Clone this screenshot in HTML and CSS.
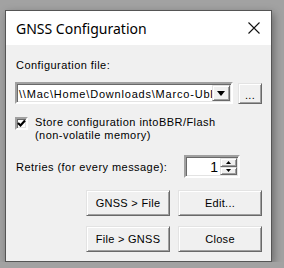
FILE: index.html
```html
<!DOCTYPE html>
<html lang="en">
<head>
  <meta charset="UTF-8">
  <title>GNSS Configuration</title>
  <link rel="stylesheet" href="styles.css">
</head>
<body>

<div class="dialog">
  <div class="titlebar">
    <span class="title">GNSS Configuration</span>
    <svg class="close" width="12" height="12" viewBox="0 0 12 12">
      <path d="M0.5 0.5 L11.5 11.5 M11.5 0.5 L0.5 11.5" stroke="#111" stroke-width="1.1" fill="none"/>
    </svg>
  </div>

  <div class="content">
    <div class="label">Configuration file:</div>

    <div class="file-row">
      <div class="combo sunken">
        <span class="combo-text">\\Mac\Home\Downloads\Marco-Ublox\config.txt</span>
        <span class="drop raised">
          <svg width="8" height="5" viewBox="0 0 8 5"><path d="M0 0 H8 L4 5 Z" fill="#000"/></svg>
        </span>
      </div>
      <button class="btn raised browse">...</button>
    </div>

    <div class="check-row">
      <span class="checkbox sunken">
        <svg width="9" height="9" viewBox="0 0 9 9"><path d="M1 4 L3.5 6.5 L8 1.5" stroke="#000" stroke-width="2.2" fill="none"/></svg>
      </span>
      <span class="check-text">Store configuration intoBBR/Flash<br>(non-volatile memory)</span>
    </div>

    <div class="retry-row">
      <span class="retry-label">Retries (for every message):</span>
      <div class="spin sunken">
        <span class="spin-value">1</span>
        <span class="spin-btns">
          <span class="spin-btn raised"><svg width="5" height="3" viewBox="0 0 5 3"><path d="M0 3 H5 L2.5 0 Z" fill="#000"/></svg></span>
          <span class="spin-btn raised"><svg width="5" height="3" viewBox="0 0 5 3"><path d="M0 0 H5 L2.5 3 Z" fill="#000"/></svg></span>
        </span>
      </div>
    </div>

    <div class="btn-row">
      <button class="btn raised action">GNSS &gt; File</button>
      <button class="btn raised action">Edit...</button>
    </div>
    <div class="btn-row second">
      <button class="btn raised action">File &gt; GNSS</button>
      <button class="btn raised action">Close</button>
    </div>
  </div>
</div>

</body>
</html>
```

FILE: styles.css
```css
body {
  margin: 0;
  padding: 10px 0 0 5px;
  background: #a2a2a2;
  font-family: "Liberation Sans", Arial, sans-serif;
  font-size: 11px;
  letter-spacing: 0.45px;
  color: #000;
}
.dialog {
  width: 267px;
  height: 252px;
  box-sizing: border-box;
  border: 1px solid #555;
  background: #f0f0f0;
  box-shadow: 2px 3px 8px rgba(0, 0, 0, 0.35);
}
.titlebar {
  height: 34px;
  background: #fff;
  display: flex;
  align-items: center;
  justify-content: space-between;
  padding: 0 11px 0 10px;
}
.title {
  font-family: "Noto Sans", sans-serif;
  font-size: 14px;
  letter-spacing: 0;
  color: #000;
}
.close { display: block; }
.content {
  padding: 14px 9px 0 9px;
}
.label {
  line-height: 13px;
  padding-left: 1px;
}

.sunken {
  border: 2px solid;
  border-color: #a0a0a0 #fff #fff #a0a0a0;
  box-shadow: inset 1px 1px 0 #696969, inset -1px -1px 0 #e3e3e3;
  background: #fff;
  box-sizing: border-box;
}
.raised {
  border: 1px solid;
  border-color: #e3e3e3 #696969 #696969 #e3e3e3;
  box-shadow: inset 1px 1px 0 #fff, inset -1px -1px 0 #a0a0a0;
  background: #f0f0f0;
  box-sizing: border-box;
}

.file-row {
  display: flex;
  align-items: center;
  gap: 5px;
  margin-top: 10px;
}
.combo {
  width: 218px;
  height: 22px;
  display: flex;
  align-items: stretch;
  padding: 1px;
}
.combo-text {
  flex: 1;
  overflow: hidden;
  white-space: nowrap;
  line-height: 18px;
  padding-left: 1px;
  letter-spacing: 0.8px;
}
.drop {
  width: 18px;
  display: flex;
  align-items: center;
  justify-content: center;
}
.drop svg { display: block; }

.btn {
  font-family: "Liberation Sans", Arial, sans-serif;
  font-size: 11px;
  letter-spacing: 0.3px;
  color: #000;
  padding: 0;
  margin: 0;
}
.browse {
  width: 26px;
  height: 21px;
  line-height: 15px;
  padding-top: 4px;
}

.check-row {
  display: flex;
  align-items: flex-start;
  gap: 7px;
  margin-top: 12px;
}
.checkbox {
  width: 13px;
  height: 13px;
  margin-top: 1px;
  display: flex;
  align-items: center;
  justify-content: center;
}
.checkbox svg { display: block; }
.check-text { line-height: 13px; }

.retry-row {
  display: flex;
  align-items: center;
  justify-content: space-between;
  width: 225px;
  margin-top: 13px;
}
.retry-label { padding-left: 1px; }
.spin {
  width: 56px;
  height: 23px;
  display: flex;
  padding: 1px;
}
.spin-value {
  flex: 1;
  text-align: right;
  padding-right: 2px;
  font-size: 14px;
  line-height: 19px;
  letter-spacing: 0;
}
.spin-btns {
  width: 17px;
  display: flex;
  flex-direction: column;
}
.spin-btn {
  flex: 1;
  display: flex;
  align-items: center;
  justify-content: center;
}
.spin-btn svg { display: block; }

.btn-row {
  display: flex;
  justify-content: flex-end;
  gap: 8px;
  margin-top: 12px;
}
.btn-row.second { margin-top: 10px; }
.action {
  width: 84px;
  height: 26px;
}
```
